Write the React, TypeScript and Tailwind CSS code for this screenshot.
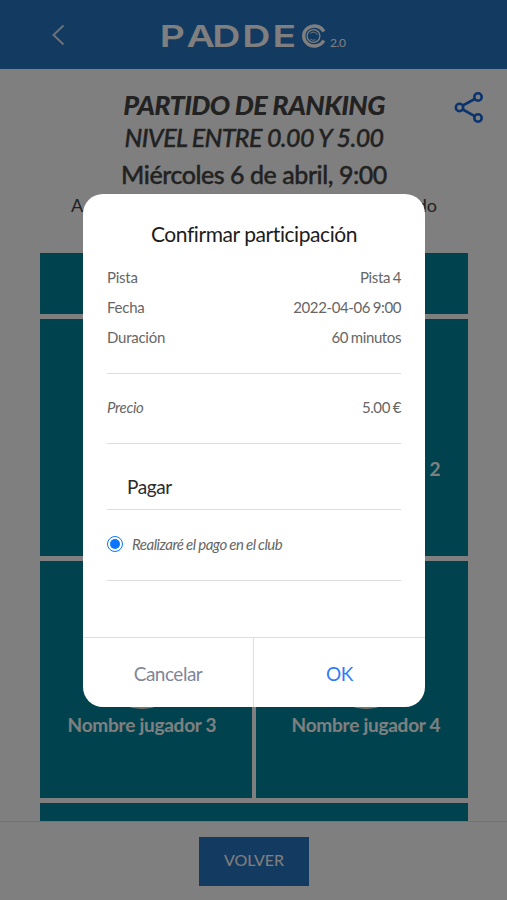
import React from "react";

function Logo() {
  return (
    <div className="flex h-[24px] items-end" aria-label="PADDEO 2.0">
      <svg width="136" height="24" viewBox="0 0 136 24" className="block overflow-visible">
        <text
          transform="scale(1.3 1)"
          x="-1.8 18.9 38.7 61.8 85"
          y="23"
          fill="#fff"
          className="font-['Inter',sans-serif] text-[30px] font-semibold"
        >
          PADDE
        </text>
      </svg>
      <svg width="26" height="24" viewBox="0 0 26 24" fill="none" stroke="#fff" className="ml-[2px] block">
        <path d="M23.8 7.5A10.6 10 0 1 0 23.8 16.5" strokeWidth="3.4" />
        <circle cx="13.5" cy="12" r="6.4" strokeWidth="1.3" />
        <path d="M10 9.6a4.6 4.6 0 0 1 7.6 1.4M10.4 15a4.6 4.6 0 0 0 5.2.8" strokeWidth="0.8" />
      </svg>
      <span className="ml-[4px] text-[12px] leading-[10px] tracking-[-0.4px]">2.0</span>
    </div>
  );
}

function Player({ name, top, shift }: { name?: string; top: string; shift: string }) {
  return (
    <div className={"flex h-[237px] flex-col items-center bg-[#00869e] " + shift}>
      <div className={"size-[88px] shrink-0 rounded-full bg-[#f4ecd8] " + top} />
      {name && (
        <span className="mt-[4px] text-[19px] leading-[24px] font-bold tracking-[-0.25px] whitespace-nowrap text-white">{name}</span>
      )}
    </div>
  );
}

function Row({ label, value, italic }: { label: string; value: string; italic?: boolean }) {
  return (
    <div className="flex h-[30px] items-center justify-between text-[15px] tracking-[-0.4px] [word-spacing:-0.7px] text-[#666]">
      <span className={italic ? "tracking-[-0.3px] italic" : "tracking-[-0.25px]"}>{label}</span>
      <span>{value}</span>
    </div>
  );
}

export default function App() {
  return (
    <div className="relative h-[900px] w-[507px] overflow-hidden bg-white font-['Lato',sans-serif]">
      <div className="flex h-full flex-col">
        <header className="flex h-[69px] shrink-0 items-start bg-[#2674c0] text-white">
          <svg width="14" height="22" viewBox="0 0 14 22" fill="none" stroke="#fff" strokeWidth="2" className="mt-[24px] ml-[51px] opacity-80">
            <path d="M12.5 1.5 2.5 11l10 9.5" />
          </svg>
          <div className="mt-[24px] ml-[97px]">
            <Logo />
          </div>
        </header>

        <main className="flex min-h-0 flex-1 flex-col overflow-hidden">
          <div className="flex h-[184px] shrink-0 text-[#444]">
            <div className="w-[71px] shrink-0" />
            <div className="flex w-[366px] shrink-0 flex-col items-center whitespace-nowrap">
              <h1 className="mt-[19px] text-[27px] leading-[34px] font-black tracking-[-0.6px] italic">PARTIDO DE RANKING</h1>
              <h2 className="-mt-px text-[25px] leading-[32px] font-medium tracking-[-0.6px] italic [-webkit-text-stroke:0.4px_#444]">NIVEL ENTRE 0.00 Y 5.00</h2>
              <h3 className="mt-[5px] text-[25px] leading-[32px] font-medium tracking-[-0.45px] [-webkit-text-stroke:0.4px_#444]">Miércoles 6 de abril, 9:00</h3>
              <p className="mt-[3px] flex w-[366px] justify-between text-[18px] leading-[24px]">
                <span>A</span>
                <span>do</span>
              </p>
            </div>
            <svg width="30" height="31" viewBox="0 0 30 31" fill="none" stroke="#1668dc" strokeWidth="2.6" className="mt-[23px] ml-[17px] shrink-0">
              <circle cx="5.5" cy="15.5" r="3.7" />
              <circle cx="24" cy="5" r="3.7" />
              <circle cx="24" cy="26" r="3.7" />
              <path d="M8.8 13.5 20.7 7M8.8 17.5l11.9 6.6" />
            </svg>
          </div>
          <div className="ml-[40px] grid w-[428px] grid-cols-[212px_212px] gap-x-[4px] gap-y-[5px]">
            <div className="col-span-2 h-[61px] bg-[#00869e]" />
            <Player top="mt-[46px]" shift="pr-[8px]" />
            <Player name="Nombre jugador 2" top="mt-[46px]" shift="pl-[2px] [word-spacing:3px]" />
            <Player name="Nombre jugador 3" top="mt-[60px]" shift="pr-[8px]" />
            <Player name="Nombre jugador 4" top="mt-[60px]" shift="pl-[8px]" />
            <div className="col-span-2 h-[61px] bg-[#00869e]" />
          </div>
        </main>

        <footer className="flex h-[79px] shrink-0 justify-center border-t border-[#e8e8e8] bg-white">
          <button className="mt-[15px] ml-[1px] h-[49px] w-[110px] bg-[#2674c0] pb-[3px] text-[16px] text-white">VOLVER</button>
        </footer>
      </div>

      <div className="absolute inset-0 bg-black/50">
        <section className="mt-[194px] ml-[83px] flex h-[513px] w-[342px] flex-col overflow-hidden rounded-[20px] bg-white">
          <h4 className="mt-[25px] text-center text-[21px] leading-[30px] tracking-[-0.43px] text-[#1c1c1c]">Confirmar participación</h4>
          <div className="mx-[24px] mt-[13px]">
            <Row label="Pista" value="Pista 4" />
            <Row label="Fecha" value="2022-04-06 9:00" />
            <Row label="Duración" value="60 minutos" />
            <div className="mt-[21px] border-t border-[#dedede]" />
            <div className="pt-[18px] pb-[21px]">
              <Row label="Precio" value="5.00 €" italic />
            </div>
            <div className="border-t border-[#dedede]" />
            <div className="flex h-[66px] items-end border-b border-[#dedede] pb-[9px] pl-[20px] text-[19px] leading-[26px] tracking-[-0.4px] text-[#2b2b2b]">Pagar</div>
            <label className="flex h-[71px] items-center border-b border-[#dedede] pb-[2px] text-[15px] tracking-[-0.48px] [word-spacing:-0.5px] text-[#666] italic">
              <span className="flex size-[16px] items-center justify-center rounded-full border-[1.5px] border-[#0a75ff]">
                <span className="size-[10px] rounded-full bg-[#0a75ff]" />
              </span>
              <span className="ml-[9px]">Realizaré el pago en el club</span>
            </label>
          </div>
          <div className="mt-auto flex h-[70px] border-t border-[#dedede] text-[19px] tracking-[-0.5px]">
            <button className="w-[171px] border-r border-[#dedede] pt-[3px] text-[#7f8699]">Cancelar</button>
            <button className="flex-1 pt-[3px] text-[#2f7cf6]">OK</button>
          </div>
        </section>
      </div>
    </div>
  );
}
